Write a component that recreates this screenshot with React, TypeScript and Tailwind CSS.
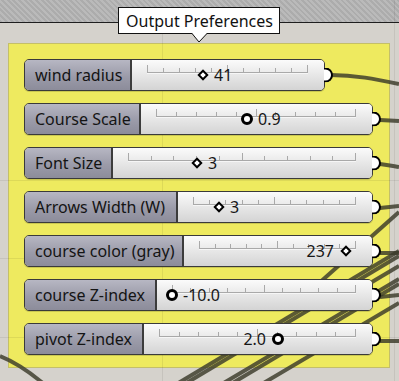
import React from 'react';

type Knob = 'diamond' | 'circle';

interface SliderDef {
  label: string;
  lw: number; // label width
  w: number; // total width
  knob: Knob;
  value: string;
  kx: number; // knob centre, from body left
  textLeft?: boolean; // value drawn before the knob
}

const sliders: SliderDef[] = [
  { label: 'wind radius', lw: 108, w: 301, knob: 'diamond', value: '41', kx: 71 },
  { label: 'Course Scale', lw: 117, w: 349, knob: 'circle', value: '0.9', kx: 106 },
  { label: 'Font Size', lw: 89, w: 349, knob: 'diamond', value: '3', kx: 84 },
  { label: 'Arrows Width (W)', lw: 154, w: 349, knob: 'diamond', value: '3', kx: 41 },
  { label: 'course color (gray)', lw: 160, w: 349, knob: 'diamond', value: '237', kx: 162, textLeft: true },
  { label: 'course Z-index', lw: 133, w: 349, knob: 'circle', value: '-10.0', kx: 15 },
  { label: 'pivot Z-index', lw: 120, w: 349, knob: 'circle', value: '2.0', kx: 134, textLeft: true },
];

const font = { fontFamily: '"Noto Sans", "Open Sans", sans-serif' };

// track with tick marks, drawn as a tiny picture
function Track({ width }: { width: number }) {
  const n = 10;
  const ticks = Array.from({ length: n + 1 }, (_, i) => Math.round((i * (width - 1)) / n) + 0.5);
  return (
    <svg width={width} height={10} className="block">
      <line x1={0} y1={7.5} x2={width} y2={7.5} stroke="#a9a9a9" strokeWidth={1} />
      <line x1={0} y1={8.5} x2={width} y2={8.5} stroke="#f6f6f6" strokeWidth={1} />
      {ticks.map((x, i) => (
        <line
          key={i}
          x1={x}
          x2={x}
          y1={i === 0 || i === n || i === 5 ? 0 : 3}
          y2={8}
          stroke="#a9a9a9"
          strokeWidth={1}
        />
      ))}
    </svg>
  );
}

function KnobMark({ kind }: { kind: Knob }) {
  if (kind === 'circle')
    return <div className="w-[12px] h-[12px] rounded-full border-[3px] border-black bg-white" />;
  return <div className="w-[8px] h-[8px] rotate-45 border-2 border-black bg-white" />;
}

function Slider({ s }: { s: SliderDef }) {
  const bw = s.w - s.lw;
  return (
    <div className="relative z-10 flex h-[32px]" style={{ width: s.w }}>
      <div className="flex h-full w-full overflow-hidden rounded-[5px] border border-[#3a3a3a] shadow-[0_1px_0_rgba(0,0,0,0.15)]">
        <div
          className="flex shrink-0 items-center border-r-2 border-[#3c3c3c] bg-[linear-gradient(#b7b7c3,#9b9ba9_55%,#8c8c9a)] pl-[10px] text-[16px] text-[#141414]"
          style={{ width: s.lw - 1 }}
        >
          {s.label}
        </div>
        <div className="relative flex-1 bg-[linear-gradient(#fbfbfb,#e9e9e9_45%,#d4d4d4)]">
          <div className="absolute left-[15px] top-[5px]">
            <Track width={bw - 32} />
          </div>
          <div
            className="absolute top-0 flex h-full items-center"
            style={{ left: s.kx, transform: 'translateX(-50%)' }}
          >
            <KnobMark kind={s.knob} />
          </div>
          <div
            className="absolute top-0 flex h-full items-center text-[16px] text-[#161616]"
            style={s.textLeft ? { right: bw - s.kx + 11 } : { left: s.kx + 11 }}
          >
            {s.value}
          </div>
        </div>
      </div>
      <div className="absolute right-[-8px] top-1/2 h-[15px] w-[9px] -translate-y-1/2 rounded-r-full border-[2.5px] border-l-0 border-black bg-white" />
    </div>
  );
}

export default function App() {
  return (
    <div className="relative h-[381px] w-[399px] overflow-hidden bg-[#d5d2cc]" style={font}>
      {/* hatched strip at the top */}
      <div className="h-[23px] border-b border-[#1e1e1e] bg-[repeating-linear-gradient(45deg,#acacac_0px,#acacac_2px,#bababa_2px,#bababa_4px)]" />

      {/* yellow group */}
      <div className="ml-[8px] mt-[20px] flex h-[325px] w-[382px] flex-col gap-[12px] border border-[#c4bf69] bg-[#eeea5f] pl-[15px] pt-[15px]">
        {sliders.map((s) => (
          <Slider key={s.label} s={s} />
        ))}
      </div>

      {/* faint canvas grid */}
      <svg className="pointer-events-none absolute inset-0" width={399} height={381}>
        <g stroke="#000" strokeOpacity={0.07} strokeWidth={1}>
          <line x1={162.5} y1={23} x2={162.5} y2={381} />
          <line x1={394.5} y1={0} x2={394.5} y2={381} />
          <line x1={0} y1={180.5} x2={399} y2={180.5} />
          <line x1={0} y1={258.5} x2={399} y2={258.5} />
          <line x1={0} y1={337.5} x2={399} y2={337.5} />
        </g>
      </svg>

      {/* wires */}
      <svg className="pointer-events-none absolute inset-0" width={399} height={381}>
        <g stroke="#3b3a2a" strokeOpacity={0.82} strokeWidth={4} fill="none">
          <path d="M331 75 C355 75 375 79 399 84" />
          <path d="M380 120 L399 121" />
          <path d="M380 164 C388 165 393 166 399 167" />
          <path d="M380 208 L399 206" />
          <path d="M380 253 L399 253" />
          <path d="M380 297 L399 295" />
          <path d="M380 341 L399 341" />
          <path d="M300 300 L399 212" />
          <path d="M372 282 L399 266" />
          <path d="M150 400 L399 251" />
          <path d="M158 400 L399 256" />
          <path d="M222 384 L399 279" />
          <path d="M231 384 L399 284" />
          <path d="M262 384 L399 303" />
          <path d="M0 356 C15 362 30 372 45 385" />
        </g>
      </svg>

      {/* tooltip */}
      <div className="absolute left-[118px] top-[7px] z-20">
        <div className="flex h-[27px] w-[162px] items-center border border-[#111] bg-white pl-[7px] text-[16px] text-[#111]">
          Output Preferences
        </div>
        <svg className="absolute left-[73px] top-[26px]" width={17} height={11}>
          <polygon points="1,0 8,9 16,0" fill="#fff" />
          <polyline points="1,0.5 8,9 16,0.5" fill="none" stroke="#111" strokeWidth={1} />
        </svg>
      </div>
    </div>
  );
}
